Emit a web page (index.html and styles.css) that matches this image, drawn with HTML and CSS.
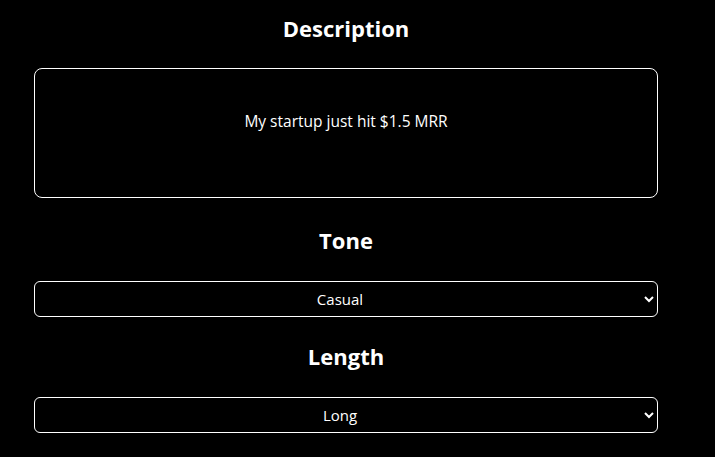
FILE: index.html
```html
<!DOCTYPE html>
<html>
<head>
<meta charset="utf-8">
<link rel="stylesheet" href="styles.css">
</head>
<body>
<main class="form">
  <h2 class="label">Description</h2>
  <textarea class="desc">My startup just hit $1.5 MRR</textarea>
  <h2 class="label">Tone</h2>
  <select class="pick">
    <option>Casual</option>
  </select>
  <h2 class="label">Length</h2>
  <select class="pick">
    <option>Long</option>
  </select>
</main>
</body>
</html>
```
FILE: styles.css
```css
html, body {
  margin: 0;
  background: #000;
  color: #fff;
  font-family: "Open Sans", "Noto Sans", sans-serif;
}
.form {
  width: 624px;
  margin-left: 34px;
  display: flex;
  flex-direction: column;
}
.label {
  margin: 0;
  text-align: center;
  font-size: 22px;
  font-weight: 700;
  line-height: 30px;
}
.label:first-child {
  margin-top: 13px;
  margin-bottom: 25px;
}
.desc {
  box-sizing: border-box;
  height: 130px;
  background: #000;
  color: #fff;
  border: 1px solid #fff;
  border-radius: 8px;
  font-family: inherit;
  font-size: 15.5px;
  text-align: center;
  padding: 41px 10px 10px;
  resize: none;
  outline: none;
}
.desc + .label {
  margin-top: 27px;
  margin-bottom: 26px;
}
.pick + .label {
  margin-top: 24px;
  margin-bottom: 26px;
}
.pick {
  box-sizing: border-box;
  height: 36px;
  background: #000;
  color: #fff;
  border: 1px solid #fff;
  border-radius: 6px;
  font-family: inherit;
  font-size: 15px;
  text-align: center;
  text-align-last: center;
}
```
